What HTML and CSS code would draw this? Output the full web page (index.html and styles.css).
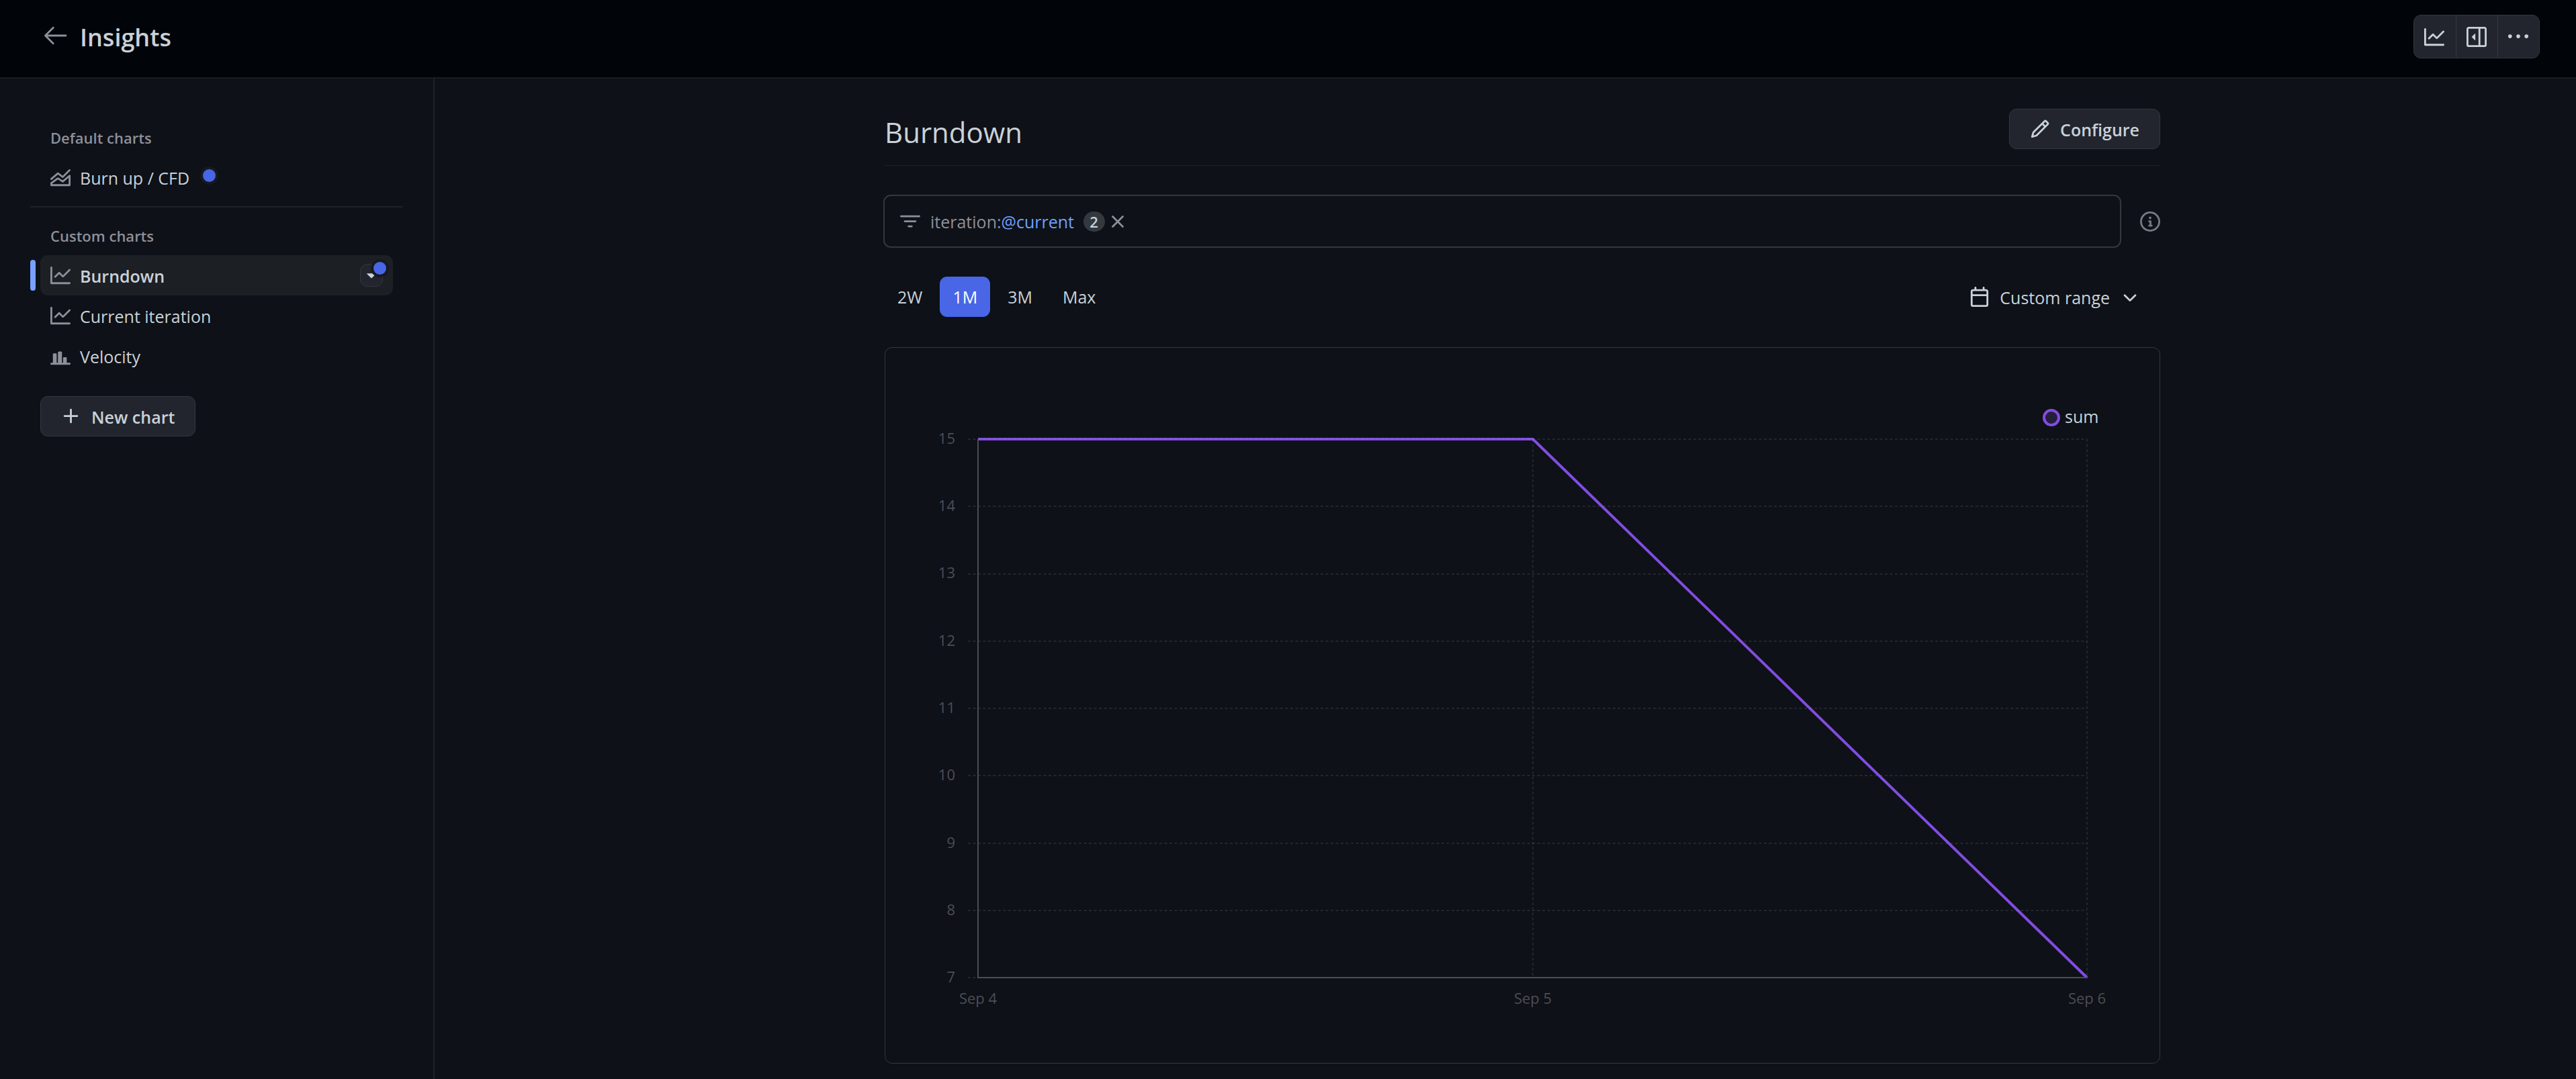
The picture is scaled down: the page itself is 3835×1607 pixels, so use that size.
FILE: index.html
```html
<!DOCTYPE html>
<html lang="en">
<head>
<meta charset="utf-8">
<title>Insights</title>
<link rel="stylesheet" href="styles.css">
</head>
<body>
<svg class="defs" aria-hidden="true">
  <symbol id="graph" viewBox="0 0 16 16"><path d="M1.5 1.75V13.5h13.75a.75.75 0 0 1 0 1.5H.75a.75.75 0 0 1-.75-.75V1.75a.75.75 0 0 1 1.5 0Zm14.28 2.53-5.25 5.25a.75.75 0 0 1-1.06 0L7 7.06 4.28 9.78a.751.751 0 0 1-1.042-.018.751.751 0 0 1-.018-1.042l3.25-3.25a.75.75 0 0 1 1.06 0L10 7.94l4.72-4.72a.751.751 0 0 1 1.042.018.751.751 0 0 1 .018 1.042Z"/></symbol>
</svg>

<header class="topbar">
  <a class="back" href="#" aria-label="Back"><svg class="icon-lg" viewBox="0 0 24 24"><path d="M10.78 19.03a.75.75 0 0 1-1.06 0l-6.25-6.25a.75.75 0 0 1 0-1.06l6.25-6.25a.749.749 0 0 1 1.275.326.749.749 0 0 1-.215.734L5.81 11.5h14.44a.75.75 0 0 1 0 1.5H5.81l4.97 4.97a.75.75 0 0 1 0 1.06Z"/></svg></a>
  <h1>Insights</h1>
  <div class="button-group">
    <button type="button" aria-label="Insights"><svg class="icon"><use href="#graph"/></svg></button>
    <button type="button" aria-label="Project details"><svg class="icon" viewBox="0 0 16 16"><path d="m4.177 7.823 2.396-2.396A.25.25 0 0 1 7 5.604v4.792a.25.25 0 0 1-.427.177L4.177 8.177a.25.25 0 0 1 0-.354Z"/><path d="M0 1.75C0 .784.784 0 1.75 0h12.5C15.216 0 16 .784 16 1.75v12.5A1.75 1.75 0 0 1 14.25 16H1.75A1.75 1.75 0 0 1 0 14.25Zm1.75-.25a.25.25 0 0 0-.25.25v12.5c0 .138.112.25.25.25H9.5v-13Zm12.5 13a.25.25 0 0 0 .25-.25V1.75a.25.25 0 0 0-.25-.25H11v13Z"/></svg></button>
    <button type="button" aria-label="More options"><svg class="icon" viewBox="0 0 16 16"><circle cx="1.5" cy="7.5" r="1.5"/><circle cx="8" cy="7.5" r="1.5"/><circle cx="14.5" cy="7.5" r="1.5"/></svg></button>
  </div>
</header>

<div class="layout">
  <nav class="sidebar" aria-label="Charts">
    <h2>Default charts</h2>
    <a class="item" href="#">
      <svg class="icon" viewBox="0 0 16 16"><path class="stroke" d="M.7 9.4 6 4.9l3.8 2.9 5.4-5.4M.75 14.25v-1.6L6 8.9l3.8 2.5 5.45-4.6v7.45Z"/></svg>
      <span>Burn up / CFD</span><i class="dot"></i>
    </a>
    <hr>
    <h2>Custom charts</h2>
    <div class="selected">
      <a class="item" href="#" aria-current="page"><svg class="icon"><use href="#graph"/></svg><span>Burndown</span></a>
      <button class="caret" type="button" aria-label="Chart options"><svg class="icon" viewBox="0 0 16 16"><path d="m4.427 7.427 3.396 3.396a.25.25 0 0 0 .354 0l3.396-3.396A.25.25 0 0 0 11.396 7H4.604a.25.25 0 0 0-.177.427Z"/></svg><i class="dot"></i></button>
    </div>
    <a class="item" href="#"><svg class="icon"><use href="#graph"/></svg><span>Current iteration</span></a>
    <a class="item" href="#"><svg class="icon" viewBox="0 0 16 16"><path d="M2 13.5V6.4L2.5 6h2l.5.4v7.1h1V5l.6-.5h2L9.2 5v8.5h.9V9.4l.5-.4h2l.4.4v4.1h2.3a.75.75 0 0 1 0 1.5H.75a.75.75 0 0 1 0-1.5Z"/></svg><span>Velocity</span></a>
    <button class="btn new-chart" type="button"><svg class="icon" viewBox="0 0 16 16"><path d="M7.75 2a.75.75 0 0 1 .75.75V7h4.25a.75.75 0 0 1 0 1.5H8.5v4.25a.75.75 0 0 1-1.5 0V8.5H2.75a.75.75 0 0 1 0-1.5H7V2.75A.75.75 0 0 1 7.75 2Z"/></svg><span>New chart</span></button>
  </nav>

  <main class="main">
    <div class="content">
      <div class="heading">
        <h2>Burndown</h2>
        <button class="btn" type="button"><svg class="icon" viewBox="0 0 16 16"><path d="M11.013 1.427a1.75 1.75 0 0 1 2.474 0l1.086 1.086a1.75 1.75 0 0 1 0 2.474l-8.61 8.61c-.21.21-.47.364-.756.445l-3.251.93a.75.75 0 0 1-.927-.928l.929-3.25c.081-.286.235-.547.445-.758l8.61-8.61Zm.176 4.823L9.75 4.81l-6.286 6.287a.253.253 0 0 0-.064.108l-.558 1.953 1.953-.558a.253.253 0 0 0 .108-.064Zm1.238-3.763a.25.25 0 0 0-.354 0L10.811 3.75l1.439 1.44 1.263-1.263a.25.25 0 0 0 0-.354Z"/></svg><span>Configure</span></button>
      </div>

      <div class="filter-row">
        <div class="filter">
          <svg class="icon" viewBox="0 0 16 16"><path d="M.75 3h14.5a.75.75 0 0 1 0 1.5H.75a.75.75 0 0 1 0-1.5ZM3.75 7h8.5a.75.75 0 0 1 0 1.5h-8.5a.75.75 0 0 1 0-1.5ZM6.75 11h2.5a.75.75 0 0 1 0 1.5h-2.5a.75.75 0 0 1 0-1.5Z"/></svg>
          <label for="filter">iteration:</label><input id="filter" type="text" value="@current">
          <span class="count">2</span>
          <button type="button" aria-label="Clear filter"><svg class="icon" viewBox="0 0 16 16"><path class="stroke" d="m4 4 8 8M12 4l-8 8"/></svg></button>
        </div>
        <svg class="icon info" viewBox="0 0 16 16"><path d="M0 8a8 8 0 1 1 16 0A8 8 0 0 1 0 8Zm8-6.5a6.5 6.5 0 1 0 0 13 6.5 6.5 0 0 0 0-13ZM6.5 7.75A.75.75 0 0 1 7.25 7h1a.75.75 0 0 1 .75.75v2.75h.25a.75.75 0 0 1 0 1.5h-2a.75.75 0 0 1 0-1.5h.25v-2h-.25a.75.75 0 0 1-.75-.75ZM8 6a1 1 0 1 1 0-2 1 1 0 0 1 0 2Z"/></svg>
      </div>

      <div class="ranges">
        <button type="button">2W</button>
        <button type="button" class="active" aria-pressed="true">1M</button>
        <button type="button">3M</button>
        <button type="button">Max</button>
        <button type="button" class="custom">
          <svg class="icon" viewBox="0 0 16 16"><path d="M4.75 0a.75.75 0 0 1 .75.75V2h5V.75a.75.75 0 0 1 1.5 0V2h1.25c.966 0 1.75.784 1.75 1.75v10.5A1.75 1.75 0 0 1 13.25 16H2.75A1.75 1.75 0 0 1 1 14.25V3.75C1 2.784 1.784 2 2.75 2H4V.75A.75.75 0 0 1 4.75 0ZM2.5 7.5v6.75c0 .138.112.25.25.25h10.5a.25.25 0 0 0 .25-.25V7.5Zm10.75-4H2.75a.25.25 0 0 0-.25.25V6h11V3.75a.25.25 0 0 0-.25-.25Z"/></svg>
          <span>Custom range</span>
          <svg class="icon" viewBox="0 0 16 16"><path d="M12.78 6.22a.749.749 0 0 1 0 1.06l-4.25 4.25a.749.749 0 0 1-1.06 0L3.22 7.28a.749.749 0 1 1 1.06-1.06L8 9.939l3.72-3.719a.749.749 0 0 1 1.06 0Z"/></svg>
        </button>
      </div>

      <section class="card">
        <svg class="chart" viewBox="0 0 1897 1065" role="img" aria-label="Burndown chart">
          <polyline class="series" points="138,136 964,136 1789,938"/>
          <g class="grid">
            <path d="M123 136H1789M123 236H1789M123 337H1789M123 437H1789M123 537H1789M123 637H1789M123 738H1789M123 838H1789M123 938H138"/>
            <path d="M964 136V938M1789 136V938"/>
          </g>
          <path class="axis" d="M138 136V938H1790"/>
          <g class="labels y">
            <text x="104" y="143">15</text><text x="104" y="243">14</text><text x="104" y="343">13</text><text x="104" y="444">12</text><text x="104" y="544">11</text><text x="104" y="644">10</text><text x="104" y="745">9</text><text x="104" y="845">8</text><text x="104" y="945">7</text>
          </g>
          <g class="labels x">
            <text x="138" y="977">Sep 4</text><text x="964" y="977">Sep 5</text><text x="1789" y="977">Sep 6</text>
          </g>
          <circle class="marker" cx="1736" cy="104" r="11"/>
          <text class="legend" x="1756" y="112">sum</text>
        </svg>
      </section>
    </div>
  </main>
</div>
</body>
</html>
```
FILE: styles.css
```css
:root {
  --bg: #0e1117;
  --text: #c9d1d9;
  --muted: #8d8f9a;
  --line: #1f2229;
  --border: #34373e;
  --button: #22252d;
  --blue: #4866e6;
}

* { box-sizing: border-box; }

body {
  margin: 0;
  min-height: 100vh;
  display: flex;
  flex-direction: column;
  background: var(--bg);
  color: var(--text);
  font: 400 25px/38px "Open Sans", "Noto Sans", sans-serif;
}

h1, h2 { margin: 0; }
a { color: inherit; text-decoration: none; }
button, input { margin: 0; padding: 0; border: 0; background: none; color: inherit; font: inherit; }
svg { display: block; }
.defs { position: absolute; width: 0; height: 0; }
.icon { width: 30px; height: 30px; flex: none; fill: currentColor; }
.icon-lg { width: 45px; height: 45px; fill: var(--muted); }
.stroke { fill: none; stroke: currentColor; stroke-width: 1.5; stroke-linecap: round; stroke-linejoin: round; }

.topbar {
  display: flex;
  align-items: flex-start;
  padding: 22px 54px 28px 60px;
  background: #010409;
  border-bottom: 2px solid #1a1c21;
}
.back { padding-top: 8px; }
.topbar h1 { margin: 9px auto 0 14px; font-size: 36px; line-height: 50px; font-weight: 600; }

.button-group {
  display: flex;
  border: 1px solid var(--border);
  border-radius: 11px;
  background: var(--button);
}
.button-group button { width: 62px; height: 63px; padding: 0 15px; }
.button-group button + button { border-left: 1px solid var(--border); }

.layout { flex: 1; display: flex; }

.sidebar {
  flex: none;
  width: 647px;
  padding: 68px 45px 45px;
  border-right: 2px solid var(--line);
}
.sidebar h2 { padding-left: 30px; font-size: 22px; line-height: 40px; font-weight: 600; color: var(--muted); }
.sidebar hr { height: 2px; margin: 13px 0 22px; border: 0; background: var(--line); }
.item { display: flex; align-items: center; gap: 14px; height: 60px; padding-left: 30px; }
.item .icon { color: var(--muted); }
.sidebar h2 + .item { margin-top: 9px; }
.dot {
  width: 27px;
  height: 27px;
  border: 4px solid #16191f;
  border-radius: 50%;
  background: var(--blue);
}
.item .dot { margin: -6px 0 0 2px; }

.selected {
  position: relative;
  display: flex;
  align-items: center;
  margin: 9px 15px 0;
  padding-right: 15px;
  border-radius: 11px;
  background: #1c1f24;
}
.selected::before {
  content: "";
  position: absolute;
  left: -15px;
  top: 7px;
  width: 8px;
  height: 46px;
  border-radius: 4px;
  background: #78a0ff;
}
.selected .item { flex: 1; padding-left: 15px; font-weight: 600; }
.caret {
  position: relative;
  width: 34px;
  height: 34px;
  padding: 0 1px;
  border: 1px solid var(--border);
  border-radius: 11px;
  background: var(--button);
}
.caret .icon { margin-top: -2px; }
.caret .dot { position: absolute; right: -10px; top: -8px; }

.btn {
  display: flex;
  align-items: center;
  gap: 15px;
  height: 60px;
  padding: 0 30px;
  border: 1px solid var(--border);
  border-radius: 11px;
  background: var(--button);
  font-weight: 600;
}
.btn span, .item span, .custom span { padding-top: 1px; }
.new-chart { margin: 30px 0 0 15px; }

.main { flex: 1; min-width: 0; padding: 45px 30px 23px 81px; }
.content { max-width: 1899px; margin: 0 auto; }

.heading {
  display: flex;
  justify-content: space-between;
  align-items: flex-start;
  padding-bottom: 24px;
  border-bottom: 1px solid var(--line);
}
.heading h2 { padding-top: 10px; font-size: 42px; line-height: 50px; font-weight: 400; }

.filter-row { display: flex; align-items: center; gap: 8px; margin: 43px 0; }
.filter {
  flex: 1;
  display: flex;
  align-items: center;
  height: 79px;
  margin: 0 20px 0 -2px;
  padding: 0 23px;
  border: 2px solid var(--border);
  border-radius: 11px;
  color: var(--muted);
}
.filter label { margin-left: 15px; }
.filter input { width: 122px; color: #6ea0ff; outline: 0; }
.count {
  min-width: 32px;
  height: 30px;
  border-radius: 15px;
  background: #34383f;
  color: var(--text);
  font-size: 22px;
  line-height: 30px;
  font-weight: 600;
  text-align: center;
}
.filter button { margin-left: 4px; }
.info { color: #777985; }

.ranges { display: flex; gap: 7px; }
.ranges button { height: 60px; padding: 0 19px; border-radius: 11px; }
.ranges .active { background: var(--blue); color: #fff; }
.ranges .custom { display: flex; align-items: center; gap: 15px; margin-left: auto; padding: 0 30px; }

.card { margin-top: 45px; border: 1px solid var(--border); border-radius: 11px; }
.chart { width: 100%; height: auto; }
.grid path { fill: none; stroke: #9599a2; stroke-opacity: .16; stroke-width: 2; stroke-dasharray: 4 3.5; }
.axis { fill: none; stroke: #4b4d55; stroke-width: 2; }
.series { fill: none; stroke: #824ce2; stroke-width: 4; }
.labels { fill: #4b4e56; font-size: 22px; }
.labels.y { text-anchor: end; }
.labels.x { text-anchor: middle; }
.marker { fill: #251e3d; stroke: #824ce2; stroke-width: 4; }
.legend { fill: var(--text); }
```
